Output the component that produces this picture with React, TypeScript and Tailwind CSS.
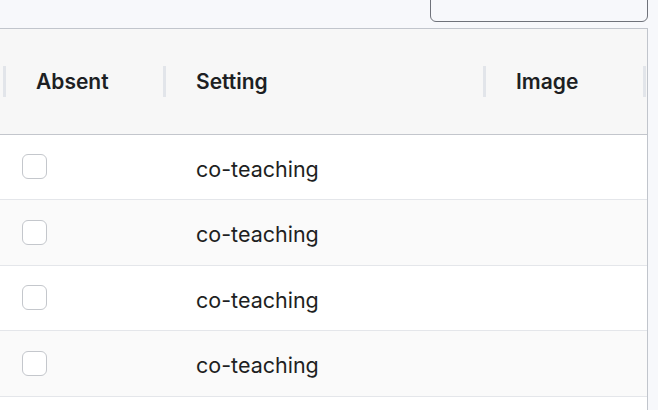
import { Fragment } from 'react';

const filas = ['co-teaching', 'co-teaching', 'co-teaching', 'co-teaching', 'co-teaching'];

export default function App() {
  return (
    <div className="h-[410px] w-[658px] overflow-hidden bg-[#f7f8fb] font-['Inter',sans-serif] text-[#1e1f22]">
      <div className="flex justify-end pr-[10px]">
        <button className="-mt-[19px] flex h-[41px] w-[218px] items-start justify-center rounded-[6px] border border-[#6f727a] bg-[#f7f8fb] pt-[1px] text-[14px] leading-[18px] text-[#c4c6cc]">
          Add column
        </button>
      </div>

      <div className="mt-[6px] w-[648px] overflow-hidden border-y border-r border-[#c1c5cc]">
        <table className="-ml-[41px] w-[844px] table-fixed border-collapse">
          <thead>
            <tr className="h-[105px] border-b border-[#c3c6cc] bg-[#f7f7f7] text-left">
              <th className="w-[44px] p-0"></th>
              <Cabecalho titulo="Absent" largura="w-[160px]" />
              <Cabecalho titulo="Setting" largura="w-[320px]" />
              <Cabecalho titulo="Image" largura="w-[160px]" />
              <Cabecalho titulo="" largura="w-[160px]" />
            </tr>
          </thead>
          <tbody>
            {filas.map((valor, i) => (
              <Fragment key={i}>
                <tr className={`h-[65.5px] border-b border-[#e4e6ea] ${i % 2 === 1 ? 'bg-[#fafafa]' : 'bg-white'}`}>
                  <td className="p-0"></td>
                  <td className="p-0 pl-[19px]">
                    <span className="block h-[25px] w-[25px] rounded-[6px] border border-[#c4c7cc] bg-white" />
                  </td>
                  <td className="p-0 pl-[33px] pt-[4px] text-[21.5px]">{valor}</td>
                  <td className="p-0"></td>
                  <td className="p-0"></td>
                </tr>
              </Fragment>
            ))}
          </tbody>
        </table>
      </div>
    </div>
  );
}

function Cabecalho({ titulo, largura }: { titulo: string; largura: string }) {
  return (
    <th className={`${largura} p-0`}>
      <div className="flex items-center pt-[1px]">
        <span className="h-[31px] w-[3px] shrink-0 bg-[#e2e5ea]" />
        <span className="pl-[30px] text-[21px] font-semibold text-[#1d1f23]">{titulo}</span>
      </div>
    </th>
  );
}
